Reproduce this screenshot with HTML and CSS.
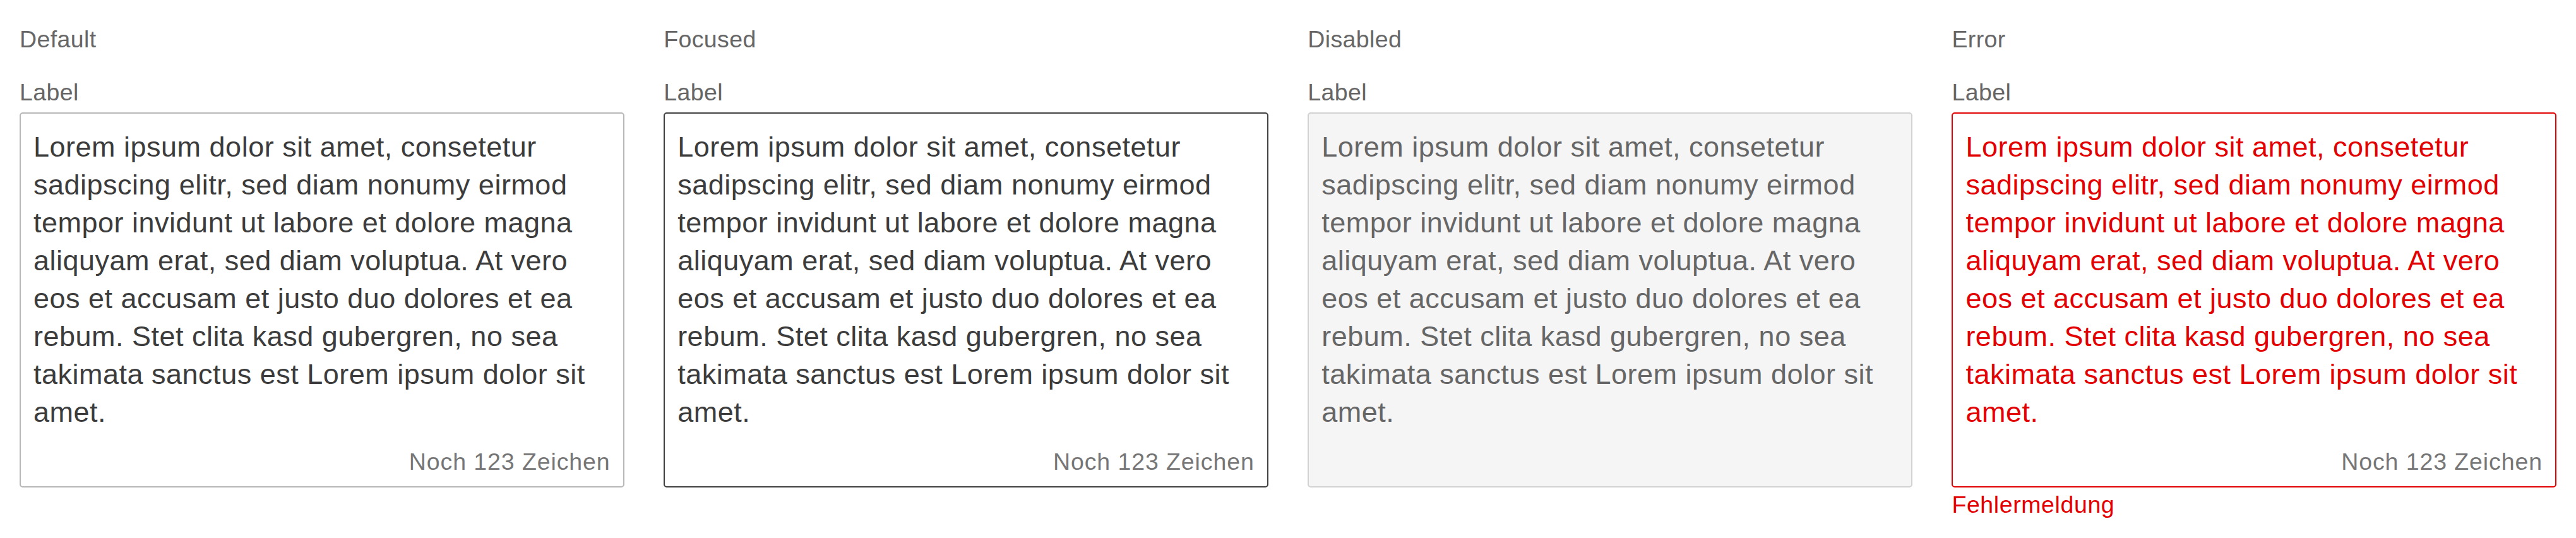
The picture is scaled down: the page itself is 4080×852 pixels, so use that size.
FILE: index.html
```html
<!DOCTYPE html>
<html lang="de">
<head>
<meta charset="utf-8">
<title>Textarea states</title>
<link rel="stylesheet" href="styles.css">
</head>
<body>
<main class="states">
  <section class="state">
    <h2 class="state-title">Default</h2>
    <label class="field-label">Label</label>
    <div class="textarea">
      <p class="textarea-text">Lorem ipsum dolor sit amet, consetetur sadipscing elitr, sed diam nonumy eirmod tempor invidunt ut labore et dolore magna aliquyam erat, sed diam voluptua. At vero eos et accusam et justo duo dolores et ea rebum. Stet clita kasd gubergren, no sea takimata sanctus est Lorem ipsum dolor sit amet.</p>
      <span class="counter">Noch 123 Zeichen</span>
    </div>
  </section>
  <section class="state">
    <h2 class="state-title">Focused</h2>
    <label class="field-label">Label</label>
    <div class="textarea textarea--focused">
      <p class="textarea-text">Lorem ipsum dolor sit amet, consetetur sadipscing elitr, sed diam nonumy eirmod tempor invidunt ut labore et dolore magna aliquyam erat, sed diam voluptua. At vero eos et accusam et justo duo dolores et ea rebum. Stet clita kasd gubergren, no sea takimata sanctus est Lorem ipsum dolor sit amet.</p>
      <span class="counter">Noch 123 Zeichen</span>
    </div>
  </section>
  <section class="state">
    <h2 class="state-title">Disabled</h2>
    <label class="field-label">Label</label>
    <div class="textarea textarea--disabled">
      <p class="textarea-text">Lorem ipsum dolor sit amet, consetetur sadipscing elitr, sed diam nonumy eirmod tempor invidunt ut labore et dolore magna aliquyam erat, sed diam voluptua. At vero eos et accusam et justo duo dolores et ea rebum. Stet clita kasd gubergren, no sea takimata sanctus est Lorem ipsum dolor sit amet.</p>
    </div>
  </section>
  <section class="state">
    <h2 class="state-title">Error</h2>
    <label class="field-label">Label</label>
    <div class="textarea textarea--error">
      <p class="textarea-text">Lorem ipsum dolor sit amet, consetetur sadipscing elitr, sed diam nonumy eirmod tempor invidunt ut labore et dolore magna aliquyam erat, sed diam voluptua. At vero eos et accusam et justo duo dolores et ea rebum. Stet clita kasd gubergren, no sea takimata sanctus est Lorem ipsum dolor sit amet.</p>
      <span class="counter">Noch 123 Zeichen</span>
    </div>
    <p class="error-message">Fehlermeldung</p>
  </section>
</main>
</body>
</html>
```

FILE: styles.css
```css
* {
  box-sizing: border-box;
}

html, body {
  margin: 0;
  padding: 0;
  background: #ffffff;
}

body {
  font-family: "Liberation Sans", Arial, Helvetica, sans-serif;
  color: #333333;
}

.states {
  display: grid;
  grid-template-columns: repeat(4, 1fr);
  column-gap: 62.5px;
  padding: 39.5px 31px 0 31px;
}

.state {
  display: flex;
  flex-direction: column;
  min-width: 0;
}

.state-title {
  margin: 0;
  font-size: 37.5px;
  line-height: 45px;
  font-weight: normal;
  letter-spacing: 0.4px;
  color: #666666;
}

.field-label {
  display: block;
  margin-top: 39px;
  font-size: 37.5px;
  line-height: 45px;
  letter-spacing: 0.4px;
  color: #666666;
}

.textarea {
  margin-top: 9.5px;
  height: 594px;
  display: flex;
  flex-direction: column;
  border: 2.5px solid #b8b8b8;
  border-radius: 5px;
  background: #ffffff;
  padding: 22.5px 20px 14px 20px;
}

.textarea--focused {
  border-color: #3f3f3f;
}

.textarea--disabled {
  border-color: #d2d2d2;
  background: #f5f5f5;
}

.textarea--disabled .textarea-text {
  color: #666666;
}

.textarea--error {
  border-color: #e30000;
}

.textarea--error .textarea-text {
  color: #e30000;
}

.textarea-text {
  margin: 0;
  font-size: 45px;
  line-height: 60px;
  letter-spacing: 0.5px;
  color: #3c3c3c;
}

.counter {
  margin-top: auto;
  align-self: flex-end;
  font-size: 37.5px;
  line-height: 50px;
  letter-spacing: 0.9px;
  color: #767676;
}

.error-message {
  margin: 5px 0 0 0;
  font-size: 37.5px;
  line-height: 45px;
  letter-spacing: 0.6px;
  color: #e30000;
}
```
